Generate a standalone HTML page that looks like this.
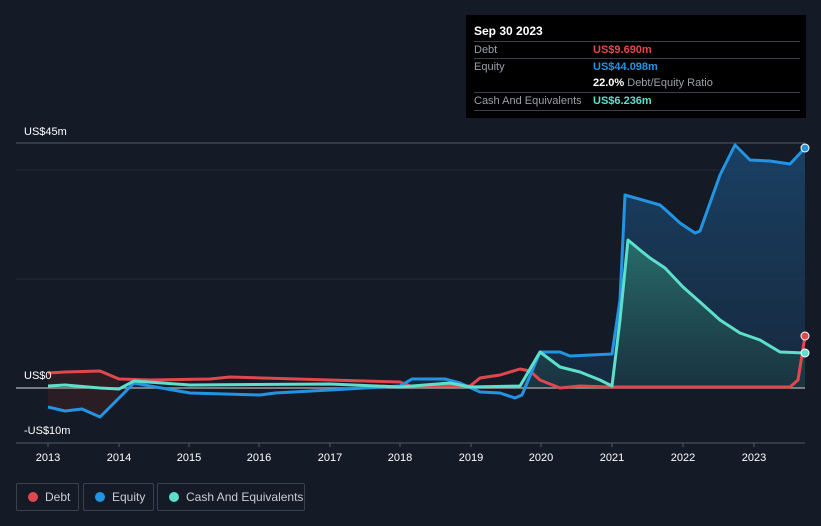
<!DOCTYPE html>
<html><head><meta charset="utf-8"><style>
body{margin:0;width:821px;height:526px;background:#151b26;font-family:"Liberation Sans",sans-serif;overflow:hidden;position:relative}
.tt{position:absolute;left:466px;top:15px;width:340px;height:103px;background:#000}
.tt .t{position:absolute;left:8px;top:9px;color:#fff;font-size:12px;font-weight:bold}
.row{position:absolute;left:8px;width:326px;border-top:1px solid #3a3f48;font-size:11px;color:#9aa0a8;height:17px;line-height:17px}
.row span{position:absolute;left:119px;font-weight:bold}
.lg{position:absolute;top:483px;height:26px;border:1px solid #3a4050;border-radius:2px;color:#c8ccd2;font-size:12px;line-height:26px}
.lg i{position:absolute;left:11px;top:8px;width:10px;height:10px;border-radius:50%}
.ax{position:absolute;color:#fff;font-size:11px}
</style></head><body>
<svg width="821" height="526" style="position:absolute;left:0;top:0">
<defs><linearGradient id="g" x1="0" y1="0" x2="0" y2="1"><stop offset="0" stop-color="#1b4a74" stop-opacity=".8"/><stop offset="1" stop-color="#17334f" stop-opacity=".6"/></linearGradient>
<linearGradient id="c" x1="0" y1="0" x2="0" y2="1"><stop offset="0" stop-color="#2c7a72" stop-opacity=".8"/><stop offset="1" stop-color="#1c3a40" stop-opacity=".6"/></linearGradient></defs>
<line x1="16" y1="143" x2="805" y2="143" stroke="#555b66"/>
<line x1="16" y1="170" x2="805" y2="170" stroke="#222936"/>
<line x1="16" y1="279" x2="805" y2="279" stroke="#222936"/>
<polygon fill="url(#g)" points="48,388 119,388 134,383 150,386 190,388 400,388 412,379 445,379 460,383 470,388 522,388 540,352 560,352 570,356 612,354 620,300 625,195 660,205 668,212 680,223 695,233 700,231 720,175 735,145 750,160 770,161 790,164 805,148 805,388"/>
<polygon fill="url(#c)" points="520,388 540,352 560,367 580,372 600,380 612,386 620,320 628,240 640,250 650,258 665,268 683,287 700,302 720,320 740,333 760,340 780,352 805,353 805,388"/>
<polygon fill="#2a1d24" points="48,373 65,372 100,371 119,379 119,398 100,417 82,409 65,411 48,407"/>
<line x1="16" y1="388" x2="805" y2="388" stroke="#9a9a9a" stroke-width="1.5"/>
<g fill="none" stroke-width="3" stroke-linejoin="round">
<polyline stroke="#e0484e" points="48,373 65,372 100,371 119,379 150,380 210,379 230,377 330,380 400,382 410,386 470,386 480,378 500,375 520,369 530,371 540,380 560,388 580,386 610,387 790,387 798,380 805,336"/>
<polyline stroke="#2394e4" points="48,407 65,411 82,409 100,417 119,398 134,383 150,386 190,393 260,395 275,393 330,390 400,386 412,379 445,379 460,383 480,392 500,393 515,398 522,395 540,352 560,352 570,356 612,354 620,300 625,195 660,205 668,212 680,223 695,233 700,231 720,175 735,145 750,160 770,161 790,164 805,148"/>
<polyline stroke="#5ce0cc" points="48,386 65,385 100,388 119,389 134,381 190,385 330,384 400,387 450,383 470,387 520,386 540,352 560,367 580,372 600,380 612,386 620,320 628,240 640,250 650,258 665,268 683,287 700,302 720,320 740,333 760,340 780,352 805,353"/>
</g>
<circle cx="805" cy="148" r="4" fill="#2394e4" stroke="#fff"/>
<circle cx="805" cy="336" r="4" fill="#e0484e" stroke="#fff"/>
<circle cx="805" cy="353" r="4" fill="#5ce0cc" stroke="#fff"/>
<line x1="16" y1="443" x2="805" y2="443" stroke="#555b66"/>
<g stroke="#555b66"><line x1="48" y1="443" x2="48" y2="447"/><line x1="119" y1="443" x2="119" y2="447"/><line x1="189" y1="443" x2="189" y2="447"/><line x1="259" y1="443" x2="259" y2="447"/><line x1="330" y1="443" x2="330" y2="447"/><line x1="400" y1="443" x2="400" y2="447"/><line x1="471" y1="443" x2="471" y2="447"/><line x1="541" y1="443" x2="541" y2="447"/><line x1="612" y1="443" x2="612" y2="447"/><line x1="683" y1="443" x2="683" y2="447"/><line x1="754" y1="443" x2="754" y2="447"/></g>
<g fill="#fff" font-size="11" text-anchor="middle" font-family="Liberation Sans"><text x="48" y="461">2013</text><text x="119" y="461">2014</text><text x="189" y="461">2015</text><text x="259" y="461">2016</text><text x="330" y="461">2017</text><text x="400" y="461">2018</text><text x="471" y="461">2019</text><text x="541" y="461">2020</text><text x="612" y="461">2021</text><text x="683" y="461">2022</text><text x="754" y="461">2023</text></g>
</svg>
<div class="ax" style="left:24px;top:126px">US$45m</div>
<div class="ax" style="left:24px;top:370px">US$0</div>
<div class="ax" style="left:24px;top:425px">-US$10m</div>
<div class="tt">
<div class="t">Sep 30 2023</div>
<div class="row" style="top:26px">Debt<span style="color:#e8464c">US$9.690m</span></div>
<div class="row" style="top:43px">Equity<span style="color:#2394e4">US$44.098m</span></div>
<div class="row" style="top:60px;border-top:none"><span style="color:#fff">22.0% <b style="color:#9aa0a8;font-weight:normal">Debt/Equity Ratio</b></span></div>
<div class="row" style="top:77px">Cash And Equivalents<span style="color:#5ce0cc">US$6.236m</span></div>
<div class="row" style="top:95px;height:0"></div>
</div>
<div class="lg" style="left:16px;width:61px"><i style="background:#e0484e"></i><span style="margin-left:28px">Debt</span></div>
<div class="lg" style="left:83px;width:69px"><i style="background:#2394e4"></i><span style="margin-left:28px">Equity</span></div>
<div class="lg" style="left:157px;width:146px"><i style="background:#5ce0cc"></i><span style="margin-left:28px">Cash And Equivalents</span></div>
</body></html>
